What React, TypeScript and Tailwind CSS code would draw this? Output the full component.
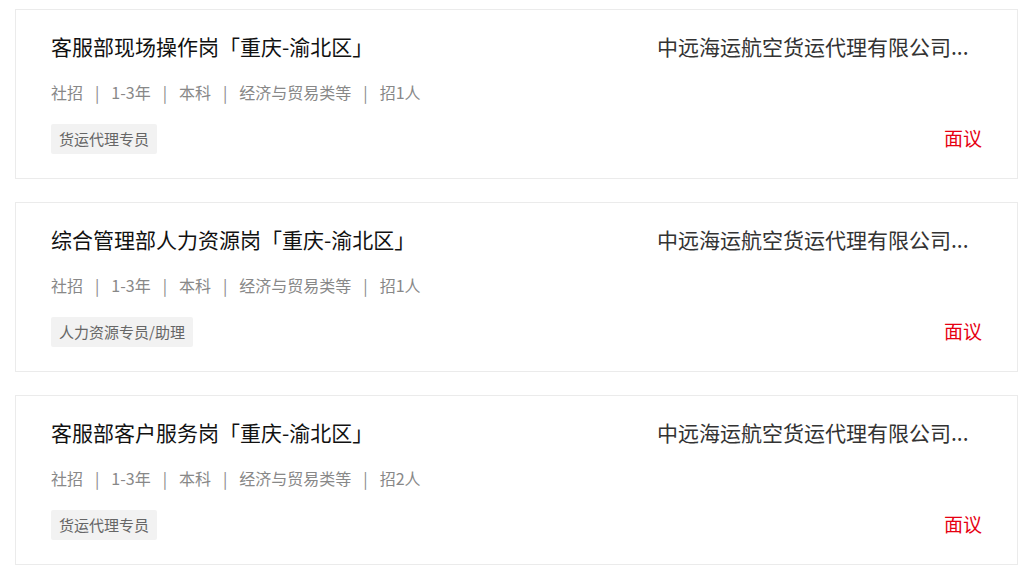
import React from "react";

type Job = { title: string; meta: string[]; tag: string };

const jobs: Job[] = [
  { title: "客服部现场操作岗「重庆-渝北区」", meta: ["社招", "1-3年", "本科", "经济与贸易类等", "招1人"], tag: "货运代理专员" },
  { title: "综合管理部人力资源岗「重庆-渝北区」", meta: ["社招", "1-3年", "本科", "经济与贸易类等", "招1人"], tag: "人力资源专员/助理" },
  { title: "客服部客户服务岗「重庆-渝北区」", meta: ["社招", "1-3年", "本科", "经济与贸易类等", "招2人"], tag: "货运代理专员" },
];

export default function App() {
  return (
    <div
      className="min-h-[578px] w-[1027px] bg-white pt-[9px] pl-[15px]"
      style={{ fontFamily: '"Microsoft YaHei", "Noto Sans CJK SC", "Noto Sans", sans-serif' }}
    >
      <div className="flex flex-col gap-[23px]">
        {jobs.map((job, i) => (
          <div key={i} className="w-[1003px] h-[170px] border border-[#ebebeb] bg-white px-[35px] pt-[22px]">
            <div className="flex items-center justify-between h-[28px]">
              <div className="text-[21px] leading-[28px] text-[#111]">{job.title}</div>
              <div className="w-[325px] text-[21px] leading-[28px] text-[#333] whitespace-nowrap">中远海运航空货运代理有限公司...</div>
            </div>
            <div className="mt-[22px] flex items-center text-[16px] leading-[20px] text-[#888]">
              {job.meta.map((m, j) => (
                <React.Fragment key={j}>
                  {j > 0 && <span className="mx-[12px] text-[#8a8a8a]">|</span>}
                  <span>{m}</span>
                </React.Fragment>
              ))}
            </div>
            <div className="mt-[22px] flex items-center justify-between">
              <span className="h-[30px] px-[8px] bg-[#f2f2f2] rounded-[2px] text-[15px] leading-[30px] text-[#666]">{job.tag}</span>
              <span className="text-[19px] leading-[26px] text-[#e60012] -mt-[3px]">面议</span>
            </div>
          </div>
        ))}
      </div>
    </div>
  );
}
